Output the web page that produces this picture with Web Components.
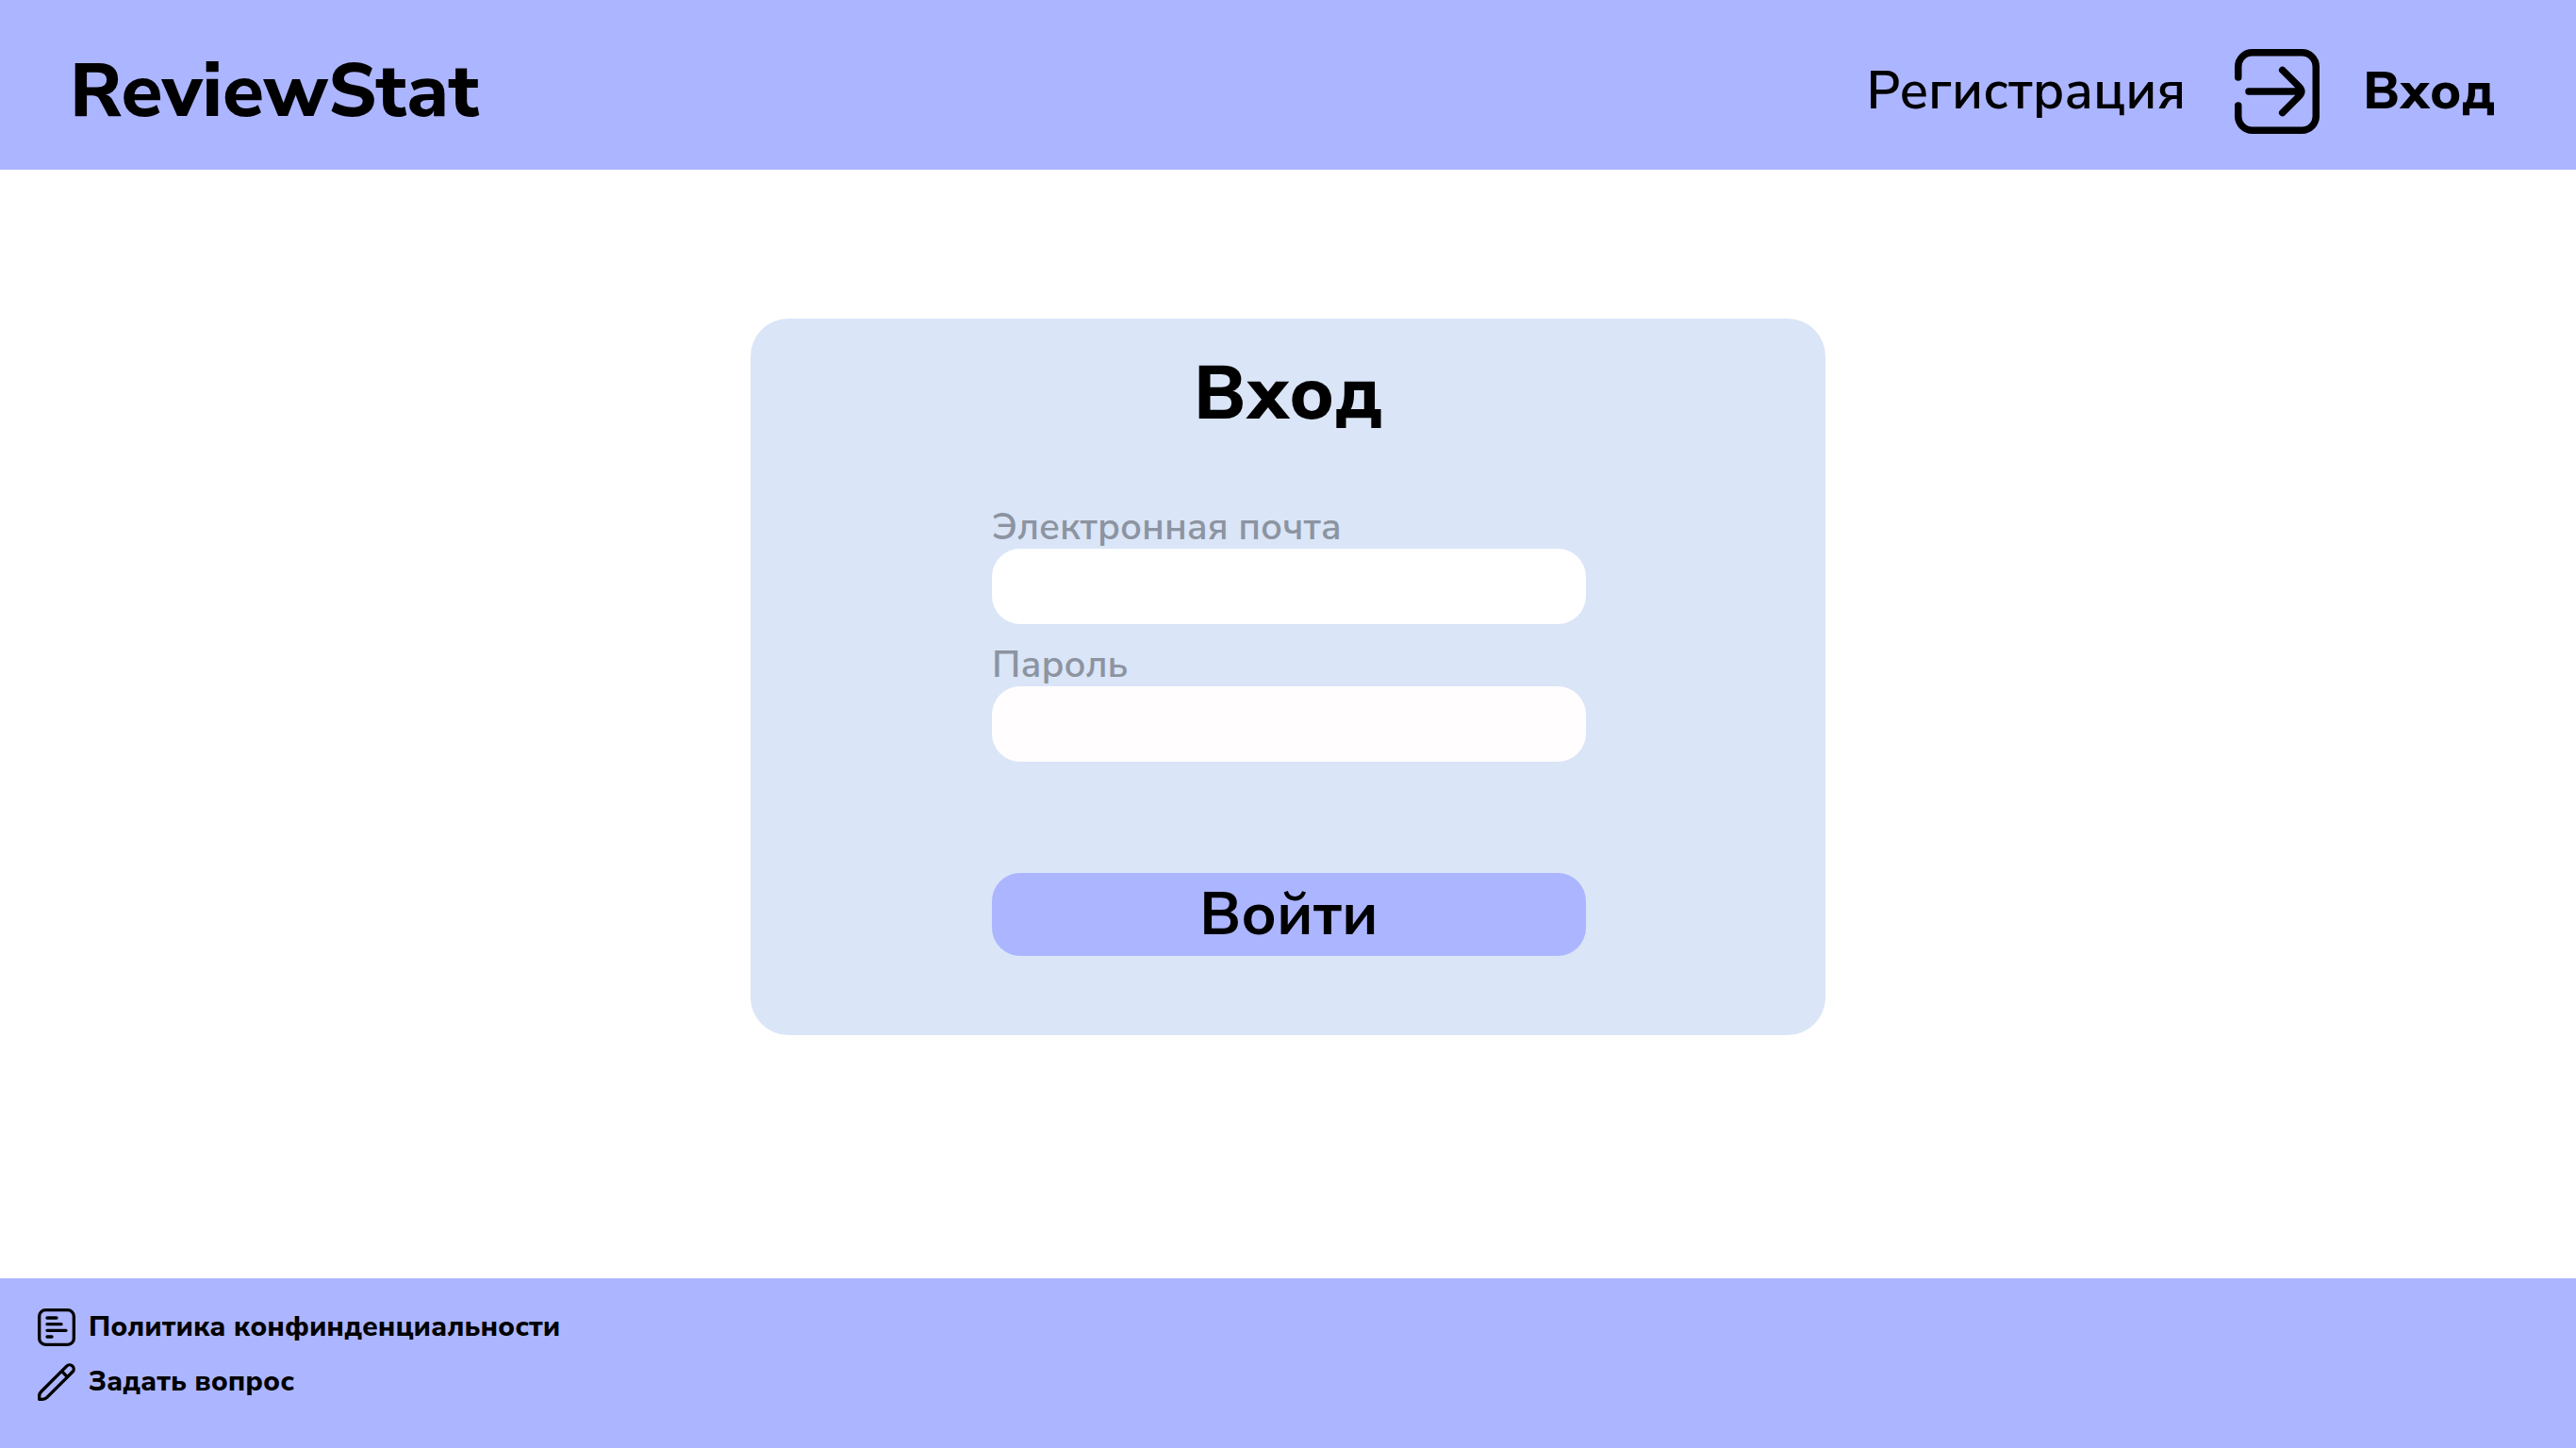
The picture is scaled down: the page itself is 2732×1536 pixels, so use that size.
<!DOCTYPE html>
<html lang="ru">
<head>
<meta charset="utf-8">
<meta name="viewport" content="width=device-width, initial-scale=1">
<title>ReviewStat — Вход</title>
<style>
  :root {
    --accent: #acb5ff;
    --panel: #dae5f7;
    --muted: #8c94a1;
  }
  body {
    margin: 0;
    background: #fff;
    color: #000;
    font-family: "Nunito Sans", "Open Sans", "Noto Sans", sans-serif;
  }
</style>
</head>
<body>
<review-app>
  <site-header slot="header">
    <nav-link href="#register">Регистрация</nav-link>
    <nav-link href="#login" icon="enter" active>Вход</nav-link>
  </site-header>
  <login-card heading="Вход" action="Войти">
    <text-field type="email" name="email" label="Электронная почта"></text-field>
    <text-field type="password" name="password" label="Пароль" tint></text-field>
  </login-card>
  <site-footer slot="footer">
    <footer-link href="#privacy" icon="document">Политика конфинденциальности</footer-link>
    <footer-link href="#ask" icon="pencil">Задать вопрос</footer-link>
  </site-footer>
</review-app>

<script>
const ICONS = {
  enter: `<svg viewBox="0 0 90 90" fill="none" stroke="currentColor" stroke-width="7.5" stroke-linecap="round" aria-hidden="true">
    <path d="M3.75 30V18.75a15 15 0 0 1 15-15h52.5a15 15 0 0 1 15 15v52.5a15 15 0 0 1-15 15h-52.5a15 15 0 0 1-15-15V60"/>
    <path d="M15 45h55M50.7 22.4 68 39.7q5.3 5.3 0 10.6L50.7 67.6"/></svg>`,
  document: `<svg viewBox="0 0 24 24" fill="none" stroke="currentColor" stroke-width="2" stroke-linecap="round" aria-hidden="true">
    <rect x="1" y="1" width="22" height="22" rx="4"/>
    <path d="M6 6h6M6 10h9M6 14h12M6 18h3"/></svg>`,
  pencil: `<svg viewBox="0 0 24 24" fill="currentColor" aria-hidden="true">
    <path d="M22.853 1.148a3.626 3.626 0 0 0-5.124 0L1.465 17.412A4.968 4.968 0 0 0 0 20.947V23a1 1 0 0 0 1 1h2.053a4.966 4.966 0 0 0 3.535-1.464L22.853 6.271a3.626 3.626 0 0 0 0-5.123ZM5.174 21.122A3.022 3.022 0 0 1 3.053 22H2v-1.053a2.98 2.98 0 0 1 .879-2.121L15.222 6.483l2.3 2.3ZM21.438 4.857 18.932 7.364l-2.3-2.295 2.507-2.507a1.623 1.623 0 1 1 2.295 2.3Z"/></svg>`
};

class BaseElement extends HTMLElement {
  connectedCallback() {
    if (this.shadowRoot) return;
    this.attachShadow({ mode: "open" }).innerHTML = this.render();
  }
}

customElements.define("review-app", class extends BaseElement {
  render() {
    return `<style>
      :host { display: flex; flex-direction: column; min-height: 100vh; }
      main { flex: 1; display: flex; justify-content: center; align-items: flex-start; padding: 158px 40px 80px; }
    </style>
    <slot name="header"></slot>
    <main><slot></slot></main>
    <slot name="footer"></slot>`;
  }
});

customElements.define("site-header", class extends BaseElement {
  render() {
    return `<style>
      :host { display: block; background: var(--accent); }
      header { display: flex; justify-content: space-between; align-items: center; min-height: 180px; box-sizing: border-box; padding: 14px 86px 0 74px; }
      .logo { font-size: 80px; line-height: 108px; font-weight: 800; color: inherit; text-decoration: none; }
      nav { display: flex; align-items: center; gap: 52px; }
    </style>
    <header>
      <a class="logo" href="#">ReviewStat</a>
      <nav><slot></slot></nav>
    </header>`;
  }
});

customElements.define("nav-link", class extends BaseElement {
  render() {
    return `<style>
      :host { display: block; font-size: 56px; line-height: 76px; font-weight: 600; }
      :host([active]) { font-weight: 800; }
      a { display: flex; align-items: center; gap: 46px; color: inherit; text-decoration: none; }
      svg { display: block; width: 90px; height: 90px; }
    </style>
    <a href="${this.getAttribute("href")}">${ICONS[this.getAttribute("icon")] || ""}<slot></slot></a>`;
  }
});

customElements.define("login-card", class extends BaseElement {
  render() {
    return `<style>
      :host { display: block; width: 100%; max-width: 1140px; }
      form { box-sizing: border-box; min-height: 760px; padding: 26px 0 84px; border-radius: 40px; background: var(--panel); display: flex; flex-direction: column; }
      h1 { margin: 0 0 64px; font-size: 80px; line-height: 108px; font-weight: 800; text-align: center; }
      .fields { display: flex; flex-direction: column; gap: 20px; margin: 0 254px 0 256px; }
      button { margin: auto 254px 0 256px; height: 88px; border: 0; padding: 0; border-radius: 30px; background: var(--accent); color: inherit; font-family: inherit; font-size: 64px; font-weight: 700; line-height: 88px; cursor: pointer; }
    </style>
    <form onsubmit="return false">
      <h1>${this.getAttribute("heading")}</h1>
      <div class="fields"><slot></slot></div>
      <button type="submit">${this.getAttribute("action")}</button>
    </form>`;
  }
});

customElements.define("text-field", class extends BaseElement {
  render() {
    return `<style>
      :host { display: block; }
      label { display: block; font-size: 40px; line-height: 46px; color: var(--muted); font-weight: 600; }
      input { display: block; box-sizing: border-box; width: 100%; height: 80px; border: 0; padding: 0 28px; border-radius: 30px; background: #fff; font: inherit; font-size: 40px; outline: none; }
      :host([tint]) input { background: #fffdfe; }
    </style>
    <label for="field">${this.getAttribute("label")}</label>
    <input id="field" type="${this.getAttribute("type")}" name="${this.getAttribute("name")}">`;
  }
});

customElements.define("site-footer", class extends BaseElement {
  render() {
    return `<style>
      :host { display: block; background: var(--accent); }
      footer { display: flex; flex-direction: column; align-items: flex-start; gap: 18px; box-sizing: border-box; min-height: 180px; padding: 32px 40px; }
    </style>
    <footer><slot></slot></footer>`;
  }
});

customElements.define("footer-link", class extends BaseElement {
  render() {
    return `<style>
      :host { display: block; font-size: 30px; line-height: 42px; font-weight: 800; }
      a { display: flex; align-items: center; gap: 14px; color: inherit; text-decoration: none; height: 40px; }
      svg { display: block; width: 40px; height: 40px; }
    </style>
    <a href="${this.getAttribute("href")}">${ICONS[this.getAttribute("icon")] || ""}<slot></slot></a>`;
  }
});
</script>
</body>
</html>
